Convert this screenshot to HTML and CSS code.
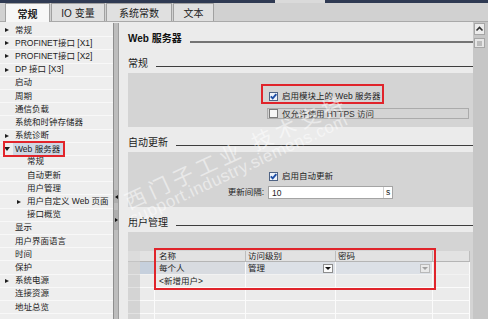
FILE: index.html
```html
<!DOCTYPE html>
<html lang="zh">
<head>
<meta charset="utf-8">
<title>Web 服务器</title>
<link rel="stylesheet" href="styles.css">
</head>
<body>
<div class="screen">
  <div class="topline"><span class="tl-dark a"></span><span class="tl-light"></span><span class="tl-dark b"></span></div>
  <div class="tabs">
    <div class="tab t1 active">常规</div>
    <div class="tab t2">IO 变量</div>
    <div class="tab t3">系统常数</div>
    <div class="tab t4">文本</div>
  </div>
  <div class="main">
    <ul class="tree">
      <li class="ti"><span class="ab"><i class="arr-r"></i></span>常规</li>
      <li class="ti"><span class="ab"><i class="arr-r"></i></span>PROFINET接口 [X1]</li>
      <li class="ti"><span class="ab"><i class="arr-r"></i></span>PROFINET接口 [X2]</li>
      <li class="ti"><span class="ab"><i class="arr-r"></i></span>DP 接口 [X3]</li>
      <li class="ti"><span class="ab"></span>启动</li>
      <li class="ti"><span class="ab"></span>周期</li>
      <li class="ti"><span class="ab"></span>通信负载</li>
      <li class="ti"><span class="ab"></span>系统和时钟存储器</li>
      <li class="ti"><span class="ab"><i class="arr-r"></i></span>系统诊断</li>
      <li class="ti"><span class="sel"><span class="ab sm"><i class="arr-d"></i></span><span class="sel-label">Web 服务器</span></span></li>
      <li class="ti l1"><span class="ab"></span>常规</li>
      <li class="ti l1"><span class="ab"></span>自动更新</li>
      <li class="ti l1"><span class="ab"></span>用户管理</li>
      <li class="ti l1"><span class="ab"><i class="arr-r"></i></span>用户自定义 Web 页面</li>
      <li class="ti l1"><span class="ab"></span>接口概览</li>
      <li class="ti"><span class="ab"></span>显示</li>
      <li class="ti"><span class="ab"></span>用户界面语言</li>
      <li class="ti"><span class="ab"></span>时间</li>
      <li class="ti"><span class="ab"></span>保护</li>
      <li class="ti"><span class="ab"><i class="arr-r"></i></span>系统电源</li>
      <li class="ti"><span class="ab"></span>连接资源</li>
      <li class="ti"><span class="ab"></span>地址总览</li>
    </ul>
    <div class="splitter">
      <div class="handle h1"><i class="sp-l"></i></div>
      <div class="handle h2"><i class="sp-r"></i></div>
    </div>
    <div class="panel">
      <div class="content">
        <div class="heading"><span class="htext">Web 服务器</span><span class="hline"></span></div>

        <div class="section"><span class="stext">常规</span><span class="sline"></span></div>
        <div class="box box1">
          <div class="row">
            <div class="redbox">
              <svg class="cb" width="9" height="9" viewBox="0 0 9 9"><rect x=".5" y=".5" width="8" height="8" fill="#eef3fb" stroke="#4f6384"/><path d="M1.8 4.4 L3.7 6.4 L7.3 2.1" fill="none" stroke="#1d4ea6" stroke-width="1.9"/></svg>
              <span class="cbl">启用模块上的 Web 服务器</span>
            </div>
          </div>
          <div class="row">
            <div class="focusbox">
              <svg class="cb" width="9" height="9" viewBox="0 0 9 9"><rect x=".5" y=".5" width="8" height="8" fill="#f7f7f7" stroke="#7a7a7a"/></svg>
              <span class="cbl">仅允许使用 HTTPS 访问</span>
            </div>
          </div>
        </div>

        <div class="section"><span class="stext">自动更新</span><span class="sline"></span></div>
        <div class="box box2">
          <div class="row cbrow">
            <svg class="cb" width="9" height="9" viewBox="0 0 9 9"><rect x=".5" y=".5" width="8" height="8" fill="#eef3fb" stroke="#4f6384"/><path d="M1.8 4.4 L3.7 6.4 L7.3 2.1" fill="none" stroke="#1d4ea6" stroke-width="1.9"/></svg>
            <span class="cbl">启用自动更新</span>
          </div>
          <div class="field">
            <span class="flabel">更新间隔:</span>
            <div class="input"><span class="ival">10</span><span class="iunit">s</span></div>
          </div>
        </div>

        <div class="section"><span class="stext">用户管理</span><span class="sline"></span></div>
        <div class="box box3">
          <div class="table">
            <div class="tr thead">
              <span class="gut"></span><span class="c stub"></span><span class="c cname">名称</span><span class="c cacc">访问级别</span><span class="c cpwd">密码</span><span class="c cext"></span>
            </div>
            <div class="tr r1">
              <span class="gut"></span><span class="c stub"></span><span class="c cname">每个人</span><span class="c cacc">管理<span class="dd"><i></i></span></span><span class="c cpwd"><span class="dd dis"><i></i></span></span><span class="c cext"></span>
            </div>
            <div class="tr r2">
              <span class="gut"></span><span class="c stub"></span><span class="c cname">&lt;新增用户&gt;</span><span class="c cacc"></span><span class="c cpwd"></span><span class="c cext"></span>
            </div>
            <div class="tr">
              <span class="gut"></span><span class="c stub"></span><span class="c cname"></span><span class="c cacc"></span><span class="c cpwd"></span><span class="c cext"></span>
            </div>
            <div class="tr">
              <span class="gut"></span><span class="c stub"></span><span class="c cname"></span><span class="c cacc"></span><span class="c cpwd"></span><span class="c cext"></span>
            </div>
            <div class="tr">
              <span class="gut"></span><span class="c stub"></span><span class="c cname"></span><span class="c cacc"></span><span class="c cpwd"></span><span class="c cext"></span>
            </div>
            <div class="redframe"></div>
          </div>
        </div>
      </div>
      <div class="watermark">
        <div class="wm1">西门子工业 技术支持</div>
        <div class="wm2">support.industry.siemens.com</div>
      </div>
    </div>
    <div class="vscroll">
      <div class="sbtn"><svg width="9" height="6" viewBox="0 0 9 6"><path d="M1.5 4.5 L4.5 1.5 L7.5 4.5" fill="none" stroke="#333" stroke-width="1.6"/></svg></div>
      <div class="thumb"><span></span></div>
    </div>
  </div>
</div>
</body>
</html>
```

FILE: styles.css
```css
* { box-sizing: border-box; margin: 0; padding: 0; }
html, body { width: 488px; height: 319px; overflow: hidden; }
body {
  font-family: "Liberation Sans", "Noto Sans CJK SC", sans-serif;
  font-size: 8.5px;
  color: #1c1c1c;
  background: #ebebeb;
}
.screen { width: 488px; height: 319px; display: flex; flex-direction: column; }

/* top strip */
.topline { height: 3px; flex: none; display: flex; }
.tl-dark { background: #2f3a53; }
.tl-dark.a { width: 275px; }
.tl-light { width: 50px; background: #dadada; }
.tl-dark.b { flex: 1; }

.tabs {
  height: 19px; flex: none; display: flex; gap: 1px;
  background: #d1d1d1; border-bottom: 1px solid #a9a9a9; padding-left: 5px;
}
.tab {
  height: 18px; display: flex; align-items: center; justify-content: center;
  font-size: 10px; color: #222; background: #e0e0e0;
  border: 1px solid #a1a1a1; border-bottom: none;
}
.tab.active { background: #f7f7f7; font-weight: bold; height: 19px; margin-bottom: -1px; position: relative; }
.t1 { width: 45px; }
.t2 { width: 54px; }
.t3 { width: 66px; }
.t4 { width: 41px; }

.main { flex: 1; display: flex; min-height: 0; }

/* tree */
.tree { width: 113px; flex: none; list-style: none; background: #eeeeee; padding-top: 2px; overflow: hidden; }
.ti {
  height: 13.2px; line-height: 13px; white-space: nowrap;
  padding-left: 5px; display: flex; align-items: center;
  border-bottom: 1px solid #f8f8f8;
}
.ti.l1 { padding-left: 17px; }
.ab { width: 10px; flex: none; display: inline-flex; align-items: center; height: 10px; }
.ab.sm { width: 8px; }
.arr-r { display: block; width: 0; height: 0; border-left: 4px solid #1e1e1e; border-top: 2.5px solid transparent; border-bottom: 2.5px solid transparent; }
.arr-d { display: block; width: 0; height: 0; border-top: 4px solid #1e1e1e; border-left: 3px solid transparent; border-right: 3px solid transparent; margin-left: -1px; }
.sel { display: inline-flex; align-items: center; height: 12px; outline: 2px solid #e2252b; outline-offset: 0; }
.sel-label { background: #cfd8e4; padding: 0 3px 0 2px; line-height: 12px; }

/* splitter */
.splitter {
  width: 6px; flex: none; background: #bdbdbd;
  border-left: 1px solid #8e8e8e; border-right: 1px solid #9d9d9d;
  margin-top: 1px; display: flex; flex-direction: column;
}
.handle { height: 13px; background: #aeaeae; display: flex; align-items: center; justify-content: center; }
.h1 { margin-top: 167px; }
.h2 { margin-top: 7px; height: 20px; }
.sp-l { width: 0; height: 0; border-right: 3px solid #111; border-top: 2px solid transparent; border-bottom: 2px solid transparent; }
.sp-r { width: 0; height: 0; border-left: 3px solid #111; border-top: 2px solid transparent; border-bottom: 2px solid transparent; }

/* panel */
.panel { width: 354px; flex: none; position: relative; overflow: hidden; background: #ebebeb; }
.content { padding-left: 9px; }
.heading { height: 26px; padding-top: 4px; display: flex; align-items: center; }
.htext { font-size: 10px; font-weight: bold; color: #111; }
.hline { flex: 1; height: 2px; margin-top: 9px; margin-left: 8px; background: #747474; }
.section { height: 25px; padding-top: 4px; display: flex; align-items: center; }
.stext { font-size: 10px; color: #1a1a1a; }
.sline { flex: 1; height: 1px; margin-top: 8px; margin-left: 8px; background: #3d3d3d; }

.box { background: #d4d4d4; }
.box1 { height: 54px; padding-top: 11px; }
.box2 { height: 55px; padding-top: 19px; }
.box3 { height: 90px; padding-top: 19px; }
.row { display: flex; }
.cb { display: block; flex: none; }
.cbl { line-height: 10px; white-space: nowrap; }
.redbox {
  margin-left: 133px; display: flex; align-items: center; gap: 4px;
  border: 2px solid #e0242b; padding: 5px 1px 1px 6px;
}
.redbox .cb { margin-top: 0; }
.focusbox {
  margin-left: 139px; margin-top: 4px; width: 202px; height: 11px;
  border: 1px solid #ababab; display: flex; align-items: center; gap: 4px; padding-left: 1px;
}
.focusbox .cbl { color: #333; }
.cbrow { margin-left: 141px; align-items: center; gap: 4px; height: 10px; }
.field { display: grid; grid-template-columns: 140px 125px; margin-top: 5px; align-items: center; }
.flabel { text-align: right; padding-right: 4px; line-height: 10px; margin-top: -2px; }
.input {
  height: 13px; background: #fff; border: 1px solid #a4a4a4;
  display: flex; align-items: center; justify-content: space-between;
}
.ival { padding-left: 3px; font-size: 8.5px; }
.iunit { width: 9px; height: 11px; border-left: 1px solid #cfcfcf; text-align: center; line-height: 11px; }

/* table */
.table { position: relative; width: 342px; }
.tr { display: flex; height: 13px; }
.tr .c { height: 100%; line-height: 12px; padding-left: 4px; white-space: nowrap;
  border-right: 1px solid #fbfbfb; border-bottom: 1px solid #fbfbfb; background: #ebebeb; position: relative; }
.gut { width: 12px; flex: none; border-bottom: 1px solid #e2e2e2; }
.stub { width: 15px; flex: none; }
.cname { width: 91px; flex: none; }
.cacc { width: 90px; flex: none; padding-left: 2px !important; }
.cpwd { width: 97px; flex: none; padding-left: 2px !important; }
.cext { width: 37px; flex: none; }
.tr.thead { height: 11px; }
.tr.thead .c { background: #e2e2e2; border-right: 1px solid #bdbdbd; border-bottom: 1px solid #b5b5b5; line-height: 10px; }
.tr.thead .gut { background: #dcdcdc; border-bottom: 1px solid #c4c4c4; }
.tr.r1 .c { background: #dce0e6; border-bottom: 1px solid #f2f2f2; }
.tr.r1 .stub { background: #c6d0dd; }
.tr.r1 .cname { background: #d8dbe0; }
.tr.r1 .cext { background: #ebebeb; }
.dd {
  position: absolute; right: 2px; top: 2px; width: 10px; height: 9px;
  background: #fafafa; border: 1px solid #8d8d8d; display: flex; align-items: center; justify-content: center;
}
.dd i { display: block; width: 0; height: 0; border-top: 3px solid #111; border-left: 3px solid transparent; border-right: 3px solid transparent; }
.dd.dis { background: #e9e9e9; border-color: #b9b9b9; }
.dd.dis i { border-top-color: #a0a0a0; }
.redframe {
  position: absolute; left: 26px; top: -3px; width: 282px; height: 42px;
  border: 2px solid #e0242b; pointer-events: none;
}

/* watermark overlay */
.watermark {
  position: absolute; left: 1px; top: 168px; transform-origin: 0 0; transform: rotate(-25deg);
  color: rgba(255, 255, 255, 0.5); white-space: nowrap; pointer-events: none;
}
.wm1 { font-family: "Noto Sans CJK SC", sans-serif; font-size: 21px; line-height: 26px; letter-spacing: 5px; }
.wm2 { font-family: "Liberation Sans", sans-serif; font-size: 17px; line-height: 17px; letter-spacing: 0.5px; margin-top: -3px; margin-left: -3px; }

/* scrollbar */
.vscroll { width: 15px; flex: none; background: #c6c6c6; padding: 1px 3px 0 1px; }
.sbtn { height: 12px; background: #ececec; border: 1px solid #a6a6a6; display: flex; align-items: center; justify-content: center; }
.thumb { height: 10px; margin-top: 3px; background: #e6e6e6; border: 1px solid #a6a6a6; display: flex; align-items: center; justify-content: center; }
.thumb span { width: 5px; height: 5px; background: #bcbcbc; }
```
